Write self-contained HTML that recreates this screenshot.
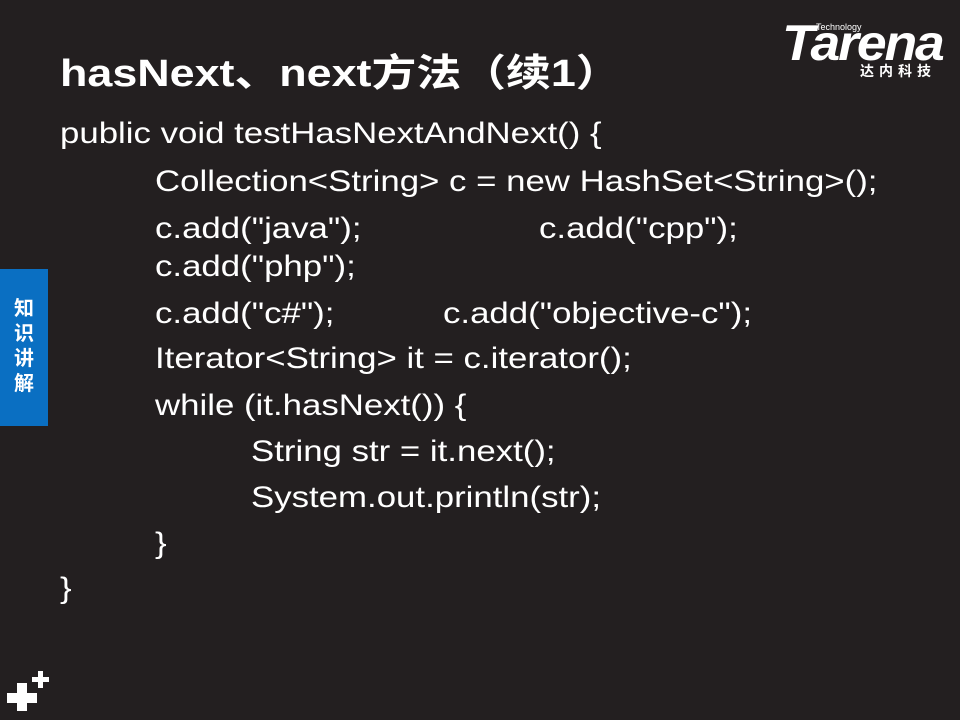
<!DOCTYPE html>
<html><head><meta charset="utf-8"><style>
body{margin:0;width:960px;height:720px;background:#231f20;position:relative;overflow:hidden;font-family:"Liberation Sans","Noto Sans CJK SC",sans-serif;color:#fff}
.t{position:absolute;left:60px;top:42px;font-size:38px;font-weight:bold;white-space:nowrap;transform:scaleX(1.18);transform-origin:left}
.l{position:absolute;font-size:30px;white-space:nowrap;line-height:36px;transform:scaleX(1.16);transform-origin:left}
.tab{position:absolute;left:0;top:269px;width:48px;height:157px;background:#0a6fc2}
.tab div{position:absolute;left:12px;top:28px;width:24px;font-size:20px;font-weight:bold;line-height:25px;text-align:center}
</style></head><body>
<div class="t">hasNext、next方法（续1）</div>
<div style="position:absolute;left:782px;top:18px;font-size:50px;font-weight:bold;font-style:italic;letter-spacing:-2px;line-height:50px;transform:scaleX(1.07);transform-origin:left">Tarena</div>
<div style="position:absolute;left:816px;top:22px;font-size:9px;line-height:10px">Technology</div>
<div style="position:absolute;left:860px;top:63px;font-size:14px;font-weight:bold;letter-spacing:5px;line-height:16px">达内科技</div>
<div class="tab"><div>知识讲解</div></div>
<div class="l" style="left:60px;top:116px">public void testHasNextAndNext() {</div>
<div class="l" style="left:155px;top:164px">Collection&lt;String&gt; c = new HashSet&lt;String&gt;();</div>
<div class="l" style="left:155px;top:211px">c.add("java");</div>
<div class="l" style="left:539px;top:211px">c.add("cpp");</div>
<div class="l" style="left:155px;top:249px">c.add("php");</div>
<div class="l" style="left:155px;top:296px">c.add("c#");</div>
<div class="l" style="left:443px;top:296px">c.add("objective-c");</div>
<div class="l" style="left:155px;top:341px">Iterator&lt;String&gt; it = c.iterator();</div>
<div class="l" style="left:155px;top:388px">while (it.hasNext()) {</div>
<div class="l" style="left:251px;top:434px">String str = it.next();</div>
<div class="l" style="left:251px;top:480px">System.out.println(str);</div>
<div class="l" style="left:155px;top:526px">}</div>
<div class="l" style="left:60px;top:571px">}</div>
<svg style="position:absolute;left:0;top:660px" width="60" height="60"><g fill="#fff"><rect x="7" y="33" width="30" height="10"/><rect x="17" y="23" width="10" height="28"/><rect x="32" y="17" width="17" height="5"/><rect x="38" y="11" width="5" height="17"/></g></svg>
</body></html>
